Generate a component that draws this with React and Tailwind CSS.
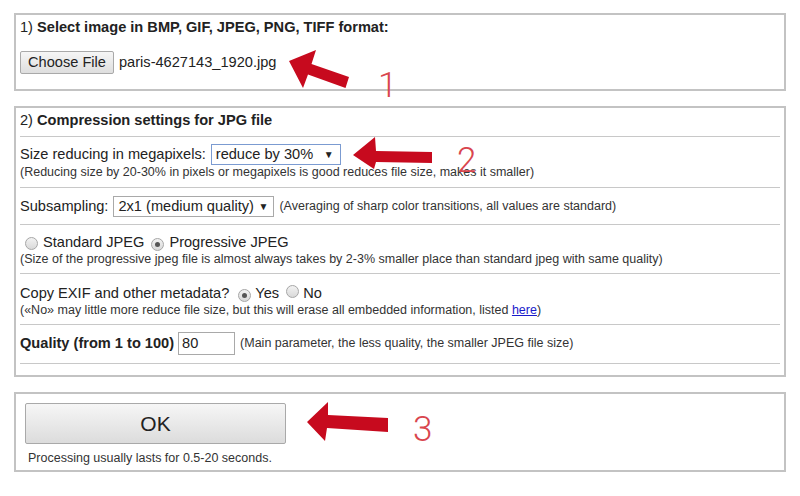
import React from "react";

function Radio({ checked }) {
  return (
    <span className="inline-flex items-center justify-center w-[13px] h-[13px] rounded-full border border-[#a6a6a6] bg-gradient-to-b from-[#f2f2f2] to-[#d9d9d9] shrink-0">
      {checked && <span className="block w-[5px] h-[5px] rounded-full bg-[#555]" />}
    </span>
  );
}

export default function App() {
  return (
    <div className="relative w-[800px] h-[496px] bg-white overflow-hidden font-['Liberation_Sans',Arial,sans-serif] text-[#222]">
      <div className="pt-[13px] mx-[14px] flex flex-col gap-[15px]">
        {/* Box 1 */}
        <div className="border-2 border-[#c3c3c3] h-[78px] px-[4px]">
          <div className="pt-[3px] leading-[18px] text-[14.6px]">
            1) <b>Select image in BMP, GIF, JPEG, PNG, TIFF format:</b>
          </div>
          <div className="mt-[15px] flex items-center text-[14.6px]">
            <span className="h-[23px] w-[94px] flex items-center justify-center border border-[#a9a9a9] rounded-[2px] bg-gradient-to-b from-[#f6f6f6] to-[#dedede] text-[#222]">
              Choose File
            </span>
            <span className="ml-[5px]">paris-4627143_1920.jpg</span>
          </div>
        </div>

        {/* Box 2 */}
        <div className="border-2 border-[#c3c3c3] h-[271px] px-[4px]">
          <div className="h-[29px] border-b border-[#c8c8c8] pt-[3px] leading-[18px] text-[14.6px]">
            2) <b>Compression settings for JPG file</b>
          </div>
          <div className="h-[51px] border-b border-[#c8c8c8] pt-[7px]">
            <div className="flex items-center h-[21px] text-[14.6px]">
              <span>Size reducing in megapixels:</span>
              <span className="ml-[5px] h-[21px] w-[130px] flex items-center justify-between border border-[#7b9bd1] pl-[4px] pr-[6px] bg-white">
                <span>reduce by 30%</span>
                <span className="text-[10px]">▼</span>
              </span>
            </div>
            <div className="leading-[14px] text-[12.5px] text-[#333]">
              (Reducing size by 20-30% in pixels or megapixels is good reduces file size, makes it smaller)
            </div>
          </div>
          <div className="h-[37px] border-b border-[#c8c8c8] pt-[8px]">
            <div className="flex items-center h-[21px] text-[14.6px]">
              <span>Subsampling:</span>
              <span className="ml-[5px] h-[21px] w-[161px] flex items-center justify-between border border-[#a9a9a9] pl-[4px] pr-[5px] bg-white">
                <span>2x1 (medium quality)</span>
                <span className="text-[10px]">▼</span>
              </span>
              <span className="ml-[5px] text-[12.5px] text-[#333]">(Averaging of sharp color transitions, all values are standard)</span>
            </div>
          </div>
          <div className="h-[49px] border-b border-[#c8c8c8] pt-[9px]">
            <div className="flex items-center h-[18px] text-[14.6px] pl-[5px]">
              <Radio />
              <span className="ml-[5px]">Standard JPEG</span>
              <span className="ml-[7px]"><Radio checked /></span>
              <span className="ml-[5px]">Progressive JPEG</span>
            </div>
            <div className="leading-[14px] text-[12.5px] text-[#333]">
              (Size of the progressive jpeg file is almost always takes by 2-3% smaller place than standard jpeg with same quality)
            </div>
          </div>
          <div className="h-[51px] border-b border-[#c8c8c8] pt-[11px]">
            <div className="flex items-center h-[18px] text-[14.6px]">
              <span>Copy EXIF and other metadata?</span>
              <span className="ml-[9px]"><Radio checked /></span>
              <span className="ml-[4px]">Yes</span>
              <span className="ml-[7px]"><Radio /></span>
              <span className="ml-[4px]">No</span>
            </div>
            <div className="leading-[14px] text-[12.5px] text-[#333]">
              («No» may little more reduce file size, but this will erase all embedded information, listed{" "}
              <a className="text-[#1a1acb] underline">here</a>)
            </div>
          </div>
          <div className="h-[39px] border-b border-[#c8c8c8] pt-[7px]">
            <div className="flex items-center h-[23px] text-[14.6px]">
              <b>Quality (from 1 to 100)</b>
              <span className="ml-[4px] h-[23px] w-[57px] flex items-center border border-[#a9a9a9] pl-[3px] bg-white">80</span>
              <span className="ml-[5px] text-[12.5px] text-[#333]">(Main parameter, the less quality, the smaller JPEG file size)</span>
            </div>
          </div>
        </div>

        {/* Box 3 */}
        <div className="border-2 border-[#c3c3c3] h-[80px]">
          <div className="pt-[9px] pl-[9px]">
            <div className="h-[41px] w-[261px] flex items-center justify-center border border-[#a9a9a9] rounded-[2px] bg-gradient-to-b from-[#f6f6f6] to-[#dcdcdc] text-[21px] text-[#222]">
              OK
            </div>
          </div>
          <div className="mt-[7px] ml-[12px] leading-[14px] text-[12.5px] text-[#333]">
            Processing usually lasts for 0.5-20 seconds.
          </div>
        </div>
      </div>

      {/* Annotation arrows */}
      <svg className="absolute left-0 top-0 pointer-events-none" width="800" height="496" viewBox="0 0 800 496">
        <polygon
          fill="#c70a1e"
          points="289,61 316,50 311.5,64 349,77 345.5,88 308,74.5 303,88"
        />
        <polygon
          fill="#c70a1e"
          points="353,155 375,137 376,151 432,152 432,163 376,162 374,169"
        />
        <polygon
          fill="#c70a1e"
          points="307,422 328,402 328,415 388,418 388,432 327,428 325,441"
        />
      </svg>
      <span className="absolute left-[378px] top-[68px] text-[35px] leading-[35px] font-light text-[#d9464e] font-['Roboto',sans-serif]">1</span>
      <span className="absolute left-[457px] top-[143px] text-[35px] leading-[35px] font-light text-[#d9464e] font-['Roboto',sans-serif]">2</span>
      <span className="absolute left-[413px] top-[412px] text-[35px] leading-[35px] font-light text-[#d9464e] font-['Roboto',sans-serif]">3</span>
    </div>
  );
}
